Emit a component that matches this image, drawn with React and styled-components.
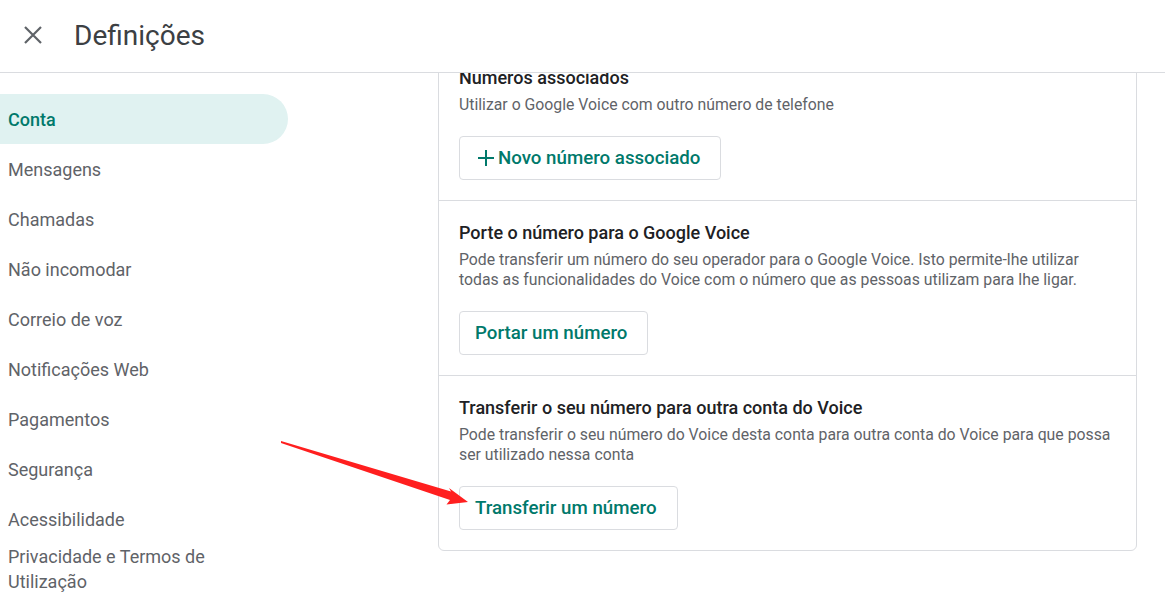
import React, { useLayoutEffect, useRef } from 'react';
import styled, { createGlobalStyle } from 'styled-components';

const GlobalStyle = createGlobalStyle`
  html, body {
    margin: 0;
    padding: 0;
    background: #fff;
    font-family: Roboto, "Liberation Sans", Arial, sans-serif;
  }
  * {
    box-sizing: border-box;
  }
`;

const Page = styled.div`
  position: relative;
  display: flex;
  flex-direction: column;
  height: 100vh;
  overflow: hidden;
`;

const Header = styled.header`
  display: flex;
  align-items: center;
  gap: 26px;
  height: 73px;
  padding: 0 0 2px 18px;
  border-bottom: 1px solid #dadce0;
  flex-shrink: 0;
`;

const CloseButton = styled.button`
  display: flex;
  align-items: center;
  justify-content: center;
  width: 30px;
  height: 30px;
  padding: 0;
  border: none;
  background: none;
  color: #5f6368;
  cursor: pointer;
`;

const Title = styled.h1`
  margin: 0;
  font-size: 28px;
  font-weight: 400;
  color: #3c4043;
`;

const Body = styled.div`
  display: flex;
  flex: 1;
  min-height: 0;
`;

const Nav = styled.nav`
  display: flex;
  flex-direction: column;
  width: 288px;
  flex-shrink: 0;
  padding-top: 21px;
`;

const NavItem = styled.a`
  display: flex;
  align-items: center;
  min-height: 50px;
  padding: 0 40px 0 8px;
  border-radius: 0 25px 25px 0;
  font-size: 18px;
  line-height: 25px;
  font-weight: ${(p) => (p.$active ? 500 : 400)};
  color: ${(p) => (p.$active ? '#00796b' : '#5f6368')};
  background: ${(p) => (p.$active ? '#e0f2f1' : 'transparent')};
  cursor: pointer;
`;

const Content = styled.main`
  flex: 1;
  overflow: hidden;
  padding: 24px 28px 80px 150px;
`;

const Card = styled.div`
  border: 1px solid #dadce0;
  border-radius: 6px;
`;

const Section = styled.section`
  display: flex;
  flex-direction: column;
  align-items: flex-start;
  padding: 20px;
  border-top: 1px solid #dadce0;

  &:first-child {
    border-top: none;
  }
`;

const SectionTitle = styled.h2`
  margin: 0 0 5px;
  font-size: 18px;
  line-height: 24px;
  font-weight: 500;
  color: #202124;
`;

const SectionText = styled.p`
  margin: 0 0 21px;
  font-size: 15.8px;
  line-height: 20px;
  color: #5f6368;
`;

const OutlineButton = styled.button`
  display: flex;
  align-items: center;
  gap: 4px;
  height: 44px;
  padding: 0 20px 0 ${(p) => (p.$icon ? '18px' : '15px')};
  border: 1px solid #dadce0;
  border-radius: 4px;
  background: #fff;
  font-family: inherit;
  font-size: 18.7px;
  font-weight: 500;
  color: #00796b;
  cursor: pointer;
`;

const Arrow = styled.svg`
  position: absolute;
  left: 0;
  top: 0;
  pointer-events: none;
`;

const navItems = [
  'Conta',
  'Mensagens',
  'Chamadas',
  'Não incomodar',
  'Correio de voz',
  'Notificações Web',
  'Pagamentos',
  'Segurança',
  'Acessibilidade',
  'Privacidade e Termos de Utilização'
];

const sections = [
  {
    title: 'Números associados',
    text: 'Utilizar o Google Voice com outro número de telefone',
    action: 'Novo número associado',
    icon: true
  },
  {
    title: 'Porte o número para o Google Voice',
    text: 'Pode transferir um número do seu operador para o Google Voice. Isto permite-lhe utilizar todas as funcionalidades do Voice com o número que as pessoas utilizam para lhe ligar.',
    action: 'Portar um número'
  },
  {
    title: 'Transferir o seu número para outra conta do Voice',
    text: 'Pode transferir o seu número do Voice desta conta para outra conta do Voice para que possa ser utilizado nessa conta',
    action: 'Transferir um número'
  }
];

function PlusIcon() {
  return (
    <svg width="16" height="16" viewBox="0 0 16 16">
      <path d="M8 0v16M0 8h16" stroke="currentColor" strokeWidth="2" />
    </svg>
  );
}

export default function App() {
  const contentRef = useRef(null);

  // the card is shown scrolled down a little, as in the screenshot
  useLayoutEffect(() => {
    if (contentRef.current) contentRef.current.scrollTop = 52;
  }, []);

  return (
    <>
      <GlobalStyle />
      <Page>
        <Header>
          <CloseButton aria-label="Fechar">
            <svg width="18" height="18" viewBox="0 0 18 18">
              <path d="M1 1l16 16M17 1L1 17" stroke="currentColor" strokeWidth="2.2" />
            </svg>
          </CloseButton>
          <Title>Definições</Title>
        </Header>
        <Body>
          <Nav>
            {navItems.map((item, i) => (
              <NavItem key={item} $active={i === 0}>
                {item}
              </NavItem>
            ))}
          </Nav>
          <Content ref={contentRef}>
            <Card>
              {sections.map((s) => (
                <Section key={s.title}>
                  <SectionTitle>{s.title}</SectionTitle>
                  <SectionText>{s.text}</SectionText>
                  <OutlineButton $icon={s.icon}>
                    {s.icon && <PlusIcon />}
                    {s.action}
                  </OutlineButton>
                </Section>
              ))}
            </Card>
          </Content>
        </Body>
        <Arrow width="1165" height="597">
          <polygon
            points="281,441 451,491.5 449,488 468,502 446.5,504.5 450,500 281,443"
            fill="#ff1f1f"
          />
        </Arrow>
      </Page>
    </>
  );
}
